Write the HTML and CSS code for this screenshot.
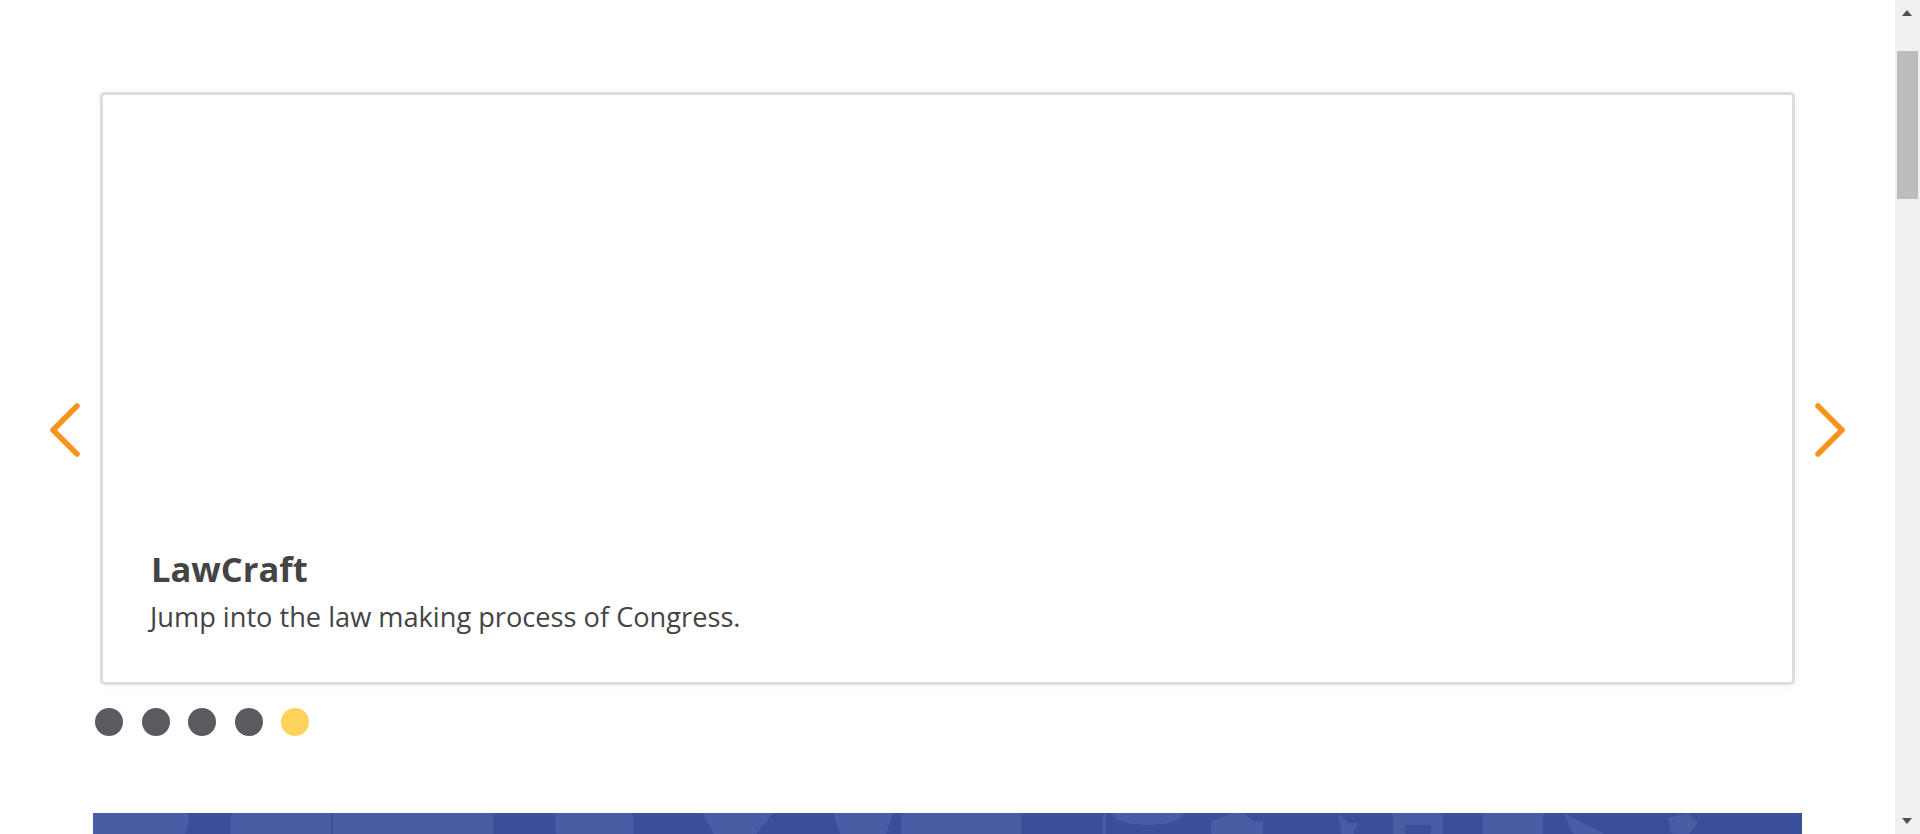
FILE: index.html
```html
<!DOCTYPE html>
<html lang="en">
<head>
<meta charset="utf-8">
<title>LawCraft</title>
<link rel="stylesheet" href="styles.css">
</head>
<body>
<div class="page">
  <section class="slider">
    <button class="arrow arrow-prev" aria-label="Previous">
      <svg width="34" height="60" viewBox="0 0 34 60"><polyline points="28,6 4,30 28,54" fill="none" stroke="#f7941d" stroke-width="5.5" stroke-linecap="round" stroke-linejoin="round"/></svg>
    </button>
    <div class="viewport">
      <article class="card">
        <h2 class="card-title">LawCraft</h2>
        <p class="card-text">Jump into the law making process of Congress.</p>
      </article>
    </div>
    <button class="arrow arrow-next" aria-label="Next">
      <svg width="34" height="60" viewBox="0 0 34 60"><polyline points="6,6 30,30 6,54" fill="none" stroke="#f7941d" stroke-width="5.5" stroke-linecap="round" stroke-linejoin="round"/></svg>
    </button>
    <div class="dots">
      <span class="dot"></span>
      <span class="dot"></span>
      <span class="dot"></span>
      <span class="dot"></span>
      <span class="dot dot-active"></span>
    </div>
  </section>
  <section class="banner">
    <svg class="banner-art" width="1709" height="60" viewBox="0 0 1709 60" preserveAspectRatio="none">
      <path d="M0 0 H95 Q100 30 60 40 L0 40 Z" fill="#4a5ca4"/>
      <rect x="138" y="0" width="100" height="60" fill="#4a5ca4"/>
      <rect x="240" y="0" width="160" height="60" fill="#4a5ca4"/>
      <path d="M462 0 H540 V60 H470 Q462 30 462 0 Z" fill="#4a5ca4"/>
      <path d="M610 0 H680 L660 25 L640 30 L620 20 Z" fill="#4a5ca4"/>
      <path d="M740 0 L760 60 H780 L800 0 Z" fill="#4a5ca4"/>
      <rect x="808" y="0" width="120" height="60" fill="#4a5ca4"/>
      <rect x="1010" y="0" width="3" height="60" fill="#4a5ca4"/>
      <ellipse cx="1055" cy="0" rx="36" ry="12" fill="#4a5ca4"/>
      <path d="M1118 8 L1140 0 H1150 L1160 8 H1170 V60 H1120 Z" fill="#4a5ca4"/>
      <path d="M1245 0 L1255 10 H1265 L1260 20 L1270 30 H1250 Z" fill="#4a5ca4"/>
      <path d="M1300 0 H1350 V60 H1300 Z M1312 12 V60 H1338 V12 Z" fill="#4a5ca4"/>
      <rect x="1390" y="0" width="60" height="60" fill="#4a5ca4"/>
      <path d="M1470 0 L1500 60 H1520 L1510 20 Z" fill="#4a5ca4"/>
      <path d="M1575 5 L1595 0 L1605 10 L1595 22 L1578 20 Z" fill="#4a5ca4"/>
    </svg>
  </section>
</div>
<div class="scrollbar" aria-hidden="true">
  <span class="sb-up"></span>
  <span class="sb-thumb"></span>
  <span class="sb-down"></span>
</div>
</body>
</html>
```

FILE: styles.css
```css
html, body {
  margin: 0;
  padding: 0;
  height: 100%;
  overflow: hidden;
  background: #ffffff;
}

body {
  font-family: "Open Sans", "Noto Sans", "Liberation Sans", sans-serif;
  color: #444444;
}

.page {
  width: calc(100% - 25px);
  padding-top: 85px;
}

.slider {
  position: relative;
  width: 1709px;
  margin: 0 auto;
}

.viewport {
  padding: 7px;
}

.card {
  box-sizing: border-box;
  height: 593px;
  border: 3px solid #dcdcdc;
  border-radius: 5px;
  box-shadow: 0 0 8px rgba(0, 0, 0, 0.06);
  background: #ffffff;
  display: flex;
  flex-direction: column;
  justify-content: flex-end;
  padding: 0 47px 48px;
}

.card-title {
  margin: 0 0 0 1px;
  font-size: 34.5px;
  line-height: 40px;
  font-weight: 700;
  color: #444444;
}

.card-text {
  margin: 11px 0 0;
  font-size: 27.2px;
  line-height: 34px;
  color: #444444;
}

.arrow {
  position: absolute;
  top: 315px;
  width: 34px;
  height: 60px;
  padding: 0;
  border: 0;
  background: transparent;
  display: flex;
}

.arrow-prev {
  left: -44px;
}

.arrow-next {
  left: 1719px;
}

.dots {
  display: flex;
  gap: 18.5px;
  padding: 16px 0 0 2px;
}

.dot {
  width: 28px;
  height: 28px;
  border-radius: 50%;
  background: #5a5b61;
}

.dot-active {
  background: #ffd25a;
}

.banner {
  width: 1709px;
  height: 300px;
  margin: 77px auto 0;
  background: #3a4e9a;
  overflow: hidden;
}

.banner-art {
  display: block;
}

.scrollbar {
  position: fixed;
  top: 0;
  right: 0;
  width: 25px;
  height: 100%;
  background: #f0f0f0;
}

.sb-thumb {
  position: absolute;
  top: 51px;
  left: 2px;
  width: 21px;
  height: 148px;
  background: #bcbcbc;
}

.sb-up,
.sb-down {
  position: absolute;
  left: 7px;
  width: 0;
  height: 0;
  border-left: 5.5px solid transparent;
  border-right: 5.5px solid transparent;
}

.sb-up {
  top: 10px;
  border-bottom: 6px solid #505050;
}

.sb-down {
  bottom: 10px;
  border-top: 6px solid #505050;
}
```
